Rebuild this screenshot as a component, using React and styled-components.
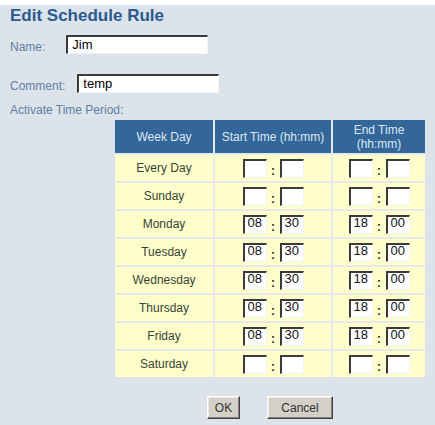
import React from "react";
import styled, { createGlobalStyle } from "styled-components";

const Global = createGlobalStyle`
  html, body {
    margin: 0;
    padding: 0;
    min-height: 100%;
    background: #dce3eb;
    font-family: "Liberation Sans", Arial, sans-serif;
  }
  #root { min-height: 425px; }
`;

const Page = styled.div`
  min-height: 425px;
  background: #dce3eb;
  border-top: 5px solid #ffffff;
  padding: 0 10px 0 10px;
  box-sizing: border-box;
`;

const Title = styled.h1`
  margin: 1px 0 0 0;
  font-size: 17px;
  line-height: 20px;
  font-weight: bold;
  color: #2c5a8f;
`;

const FieldRow = styled.div`
  display: flex;
  align-items: flex-start;
  margin-top: ${(p) => p.$top}px;
`;

const Label = styled.span`
  font-size: 12px;
  line-height: 14px;
  color: #5f7fa2;
  padding-top: ${(p) => p.$padTop || 0}px;
  margin-right: ${(p) => p.$gap || 0}px;
  display: block;
`;

const TextInput = styled.input`
  box-sizing: border-box;
  width: 142px;
  height: 19px;
  margin: 0;
  padding: 0 0 2px 4px;
  font-family: "Liberation Sans", Arial, sans-serif;
  font-size: 13px;
  color: #000;
  background: #fff;
  border-style: solid;
  border-width: 2px 1px 1px 2px;
  border-color: #3a3a3a #f4f4f4 #f4f4f4 #3a3a3a;
  outline: none;
`;

const Section = styled.div`
  margin: 3px 0 0 105px;
  width: 310px;
`;

const Grid = styled.div`
  display: grid;
  grid-template-columns: 98px 116px 92px;
  grid-auto-rows: 26px;
  grid-template-rows: 33px;
  gap: 2px;
  background: #e6e9ea;
`;

const HeadCell = styled.div`
  background: #336699;
  color: #dde7f1;
  font-size: 12px;
  line-height: 14px;
  display: flex;
  align-items: center;
  justify-content: center;
  text-align: center;
  padding: 0 6px;
`;

const DayCell = styled.div`
  background: #ffffcc;
  color: #364436;
  font-size: 12px;
  display: flex;
  align-items: center;
  justify-content: center;
`;

const TimeCell = styled.div`
  background: #ffffcc;
  display: flex;
  align-items: center;
  justify-content: center;
`;

const TimeBox = styled.input`
  box-sizing: border-box;
  width: 24px;
  height: 19px;
  margin: 0;
  padding: 0 0 4px 3px;
  font-family: "Liberation Sans", Arial, sans-serif;
  font-size: 13px;
  color: #111;
  background: #fff;
  border-style: solid;
  border-width: 2px 1px 1px 2px;
  border-color: #3a3a3a #f4f4f4 #f4f4f4 #3a3a3a;
  outline: none;
`;

const Colon = styled.span`
  width: 13px;
  text-align: center;
  font-size: 12px;
  font-weight: bold;
  color: #2a2a2a;
  align-self: center;
  padding-top: 5px;
`;

const Buttons = styled.div`
  display: flex;
  justify-content: center;
  gap: 27px;
  margin-top: 19px;
`;

const Button = styled.button`
  box-sizing: border-box;
  width: ${(p) => p.$w}px;
  height: 23px;
  margin: 0;
  padding: 0;
  font-family: "Liberation Sans", Arial, sans-serif;
  font-size: 12px;
  color: #333;
  background: #d4d0c8;
  border-style: solid;
  border-width: 1px;
  border-color: #ffffff #404040 #404040 #ffffff;
  box-shadow: inset -1px -1px 0 #808080, inset 1px 1px 0 #ece9e2;
`;

const rows = [
  ["Every Day", "", "", "", ""],
  ["Sunday", "", "", "", ""],
  ["Monday", "08", "30", "18", "00"],
  ["Tuesday", "08", "30", "18", "00"],
  ["Wednesday", "08", "30", "18", "00"],
  ["Thursday", "08", "30", "18", "00"],
  ["Friday", "08", "30", "18", "00"],
  ["Saturday", "", "", "", ""],
];

function Time({ h, m }) {
  return (
    <TimeCell>
      <TimeBox defaultValue={h} maxLength={2} />
      <Colon>:</Colon>
      <TimeBox defaultValue={m} maxLength={2} />
    </TimeCell>
  );
}

export default function App() {
  return (
    <>
      <Global />
      <Page>
        <Title>Edit Schedule Rule</Title>
        <FieldRow $top={9}>
          <Label $padTop={5} $gap={21}>Name:</Label>
          <TextInput defaultValue="Jim" />
        </FieldRow>
        <FieldRow $top={20}>
          <Label $padTop={5} $gap={12}>Comment:</Label>
          <TextInput defaultValue="temp" />
        </FieldRow>
        <FieldRow $top={10}>
          <Label>Activate Time Period:</Label>
        </FieldRow>
        <Section>
          <Grid>
            <HeadCell>Week Day</HeadCell>
            <HeadCell>Start Time (hh:mm)</HeadCell>
            <HeadCell>End Time (hh:mm)</HeadCell>
            {rows.map(([day, sh, sm, eh, em]) => (
              <React.Fragment key={day}>
                <DayCell>{day}</DayCell>
                <Time h={sh} m={sm} />
                <Time h={eh} m={em} />
              </React.Fragment>
            ))}
          </Grid>
          <Buttons>
            <Button $w={33}>OK</Button>
            <Button $w={66}>Cancel</Button>
          </Buttons>
        </Section>
      </Page>
    </>
  );
}
